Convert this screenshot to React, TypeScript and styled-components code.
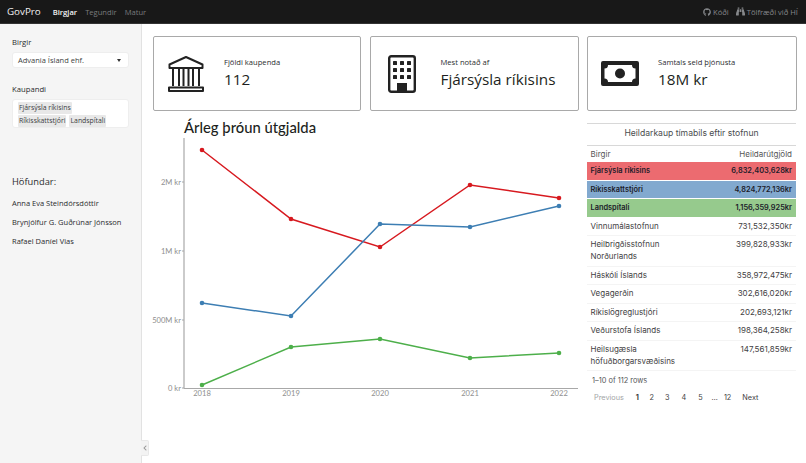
import React from 'react';
import styled, { createGlobalStyle } from 'styled-components';
import { FaGithub, FaBinoculars, FaChevronLeft } from 'react-icons/fa';

const GlobalStyle = createGlobalStyle`
  html, body {
    margin: 0;
    padding: 0;
    background: #fff;
    overflow: hidden;
  }
  body {
    font-family: "Open Sans", "Liberation Sans", sans-serif;
    color: #1d1f21;
  }
  * { box-sizing: border-box; }
`;

const Page = styled.div`
  width: 806px;
  height: 463px;
  display: flex;
  flex-direction: column;
`;

const Navbar = styled.nav`
  height: 24px;
  flex: none;
  background: #181818;
  border-bottom: 1px solid #333;
  display: flex;
  align-items: center;
  padding: 0 8px 0 7px;
`;

const Brand = styled.span`
  font-size: 9.8px;
  color: #f2f2f2;
  margin-right: 12px;
`;

const NavLink = styled.span<{ $active?: boolean }>`
  font-size: 7.6px;
  font-weight: ${(p) => (p.$active ? 600 : 400)};
  color: ${(p) => (p.$active ? '#f5f5f5' : '#797b7d')};
  margin-right: 8px;
`;

const NavRight = styled.div`
  margin-left: auto;
  display: flex;
  align-items: center;
  gap: 7px;
`;

const ExternalLink = styled.span`
  display: flex;
  align-items: center;
  gap: 2px;
  font-size: 7.6px;
  color: #85878a;
`;

const Body = styled.div`
  flex: 1;
  display: flex;
  min-height: 0;
`;

const Sidebar = styled.aside`
  position: relative;
  width: 142px;
  flex: none;
  background: #f5f5f5;
  border-right: 1px solid #e2e2e2;
  padding: 12px 12px;
`;

const FieldLabel = styled.div`
  font-size: 7.7px;
  line-height: 12px;
  color: #2a2c2e;
  margin-bottom: 4px;
`;

const SelectBox = styled.div`
  height: 16px;
  background: #fff;
  border: 1px solid #eee;
  border-radius: 3px;
  display: flex;
  align-items: center;
  justify-content: space-between;
  padding: 0 7px 0 5px;
  font-size: 7.5px;
  color: #3d3f41;
  margin-bottom: 15px;
`;

const Caret = styled.span`
  width: 0;
  height: 0;
  border-left: 2.5px solid transparent;
  border-right: 2.5px solid transparent;
  border-top: 3px solid #333;
`;

const MultiBox = styled.div`
  height: 29px;
  background: #fff;
  border: 1px solid #eee;
  border-radius: 3px;
  padding: 2px 5px;
  display: flex;
  flex-wrap: wrap;
  align-content: flex-start;
  gap: 1px 3px;
  margin-bottom: 47px;
`;

const Tag = styled.span`
  background: #e8e8e8;
  border-radius: 1px;
  padding: 0 1px;
  font-size: 6.9px;
  line-height: 12px;
  color: #3a3c3e;
`;

const AuthorsTitle = styled.div`
  font-size: 9.3px;
  line-height: 14px;
  color: #2a2c2e;
  margin-bottom: 8px;
`;

const Author = styled.div`
  font-size: 7.5px;
  line-height: 12px;
  color: #2a2c2e;
  margin-bottom: 7px;
  white-space: nowrap;
`;

const Collapse = styled.div`
  position: absolute;
  right: -8px;
  top: 416px;
  width: 8px;
  height: 16px;
  background: #f3f3f3;
  border: 1px solid #e8e8e8;
  border-left: none;
  border-radius: 0 2px 2px 0;
  display: flex;
  align-items: center;
  justify-content: center;
  color: #999;
`;

const Main = styled.main`
  flex: 1;
  min-width: 0;
  padding: 12px 10px 0 11px;
  display: flex;
  flex-direction: column;
`;

const Cards = styled.div`
  display: grid;
  grid-template-columns: 208px 209px 210px;
  column-gap: 8.5px;
  justify-content: start;
`;

const Card = styled.div`
  height: 75px;
  border: 1px solid #a9a9a9;
  border-radius: 2px;
  display: flex;
  align-items: center;
  background: #fff;
`;

const IconSlot = styled.div`
  width: 70px;
  padding-right: 7px;
  flex: none;
  display: flex;
  justify-content: center;
  color: #222;
`;

const CardText = styled.div`
  display: flex;
  flex-direction: column;
`;

const CardLabel = styled.div`
  font-size: 7.6px;
  line-height: 10px;
  color: #2b2d2f;
  margin-bottom: 2px;
`;

const CardValue = styled.div`
  font-size: 15.3px;
  line-height: 21px;
  color: #1d1f21;
`;

const Content = styled.div`
  display: flex;
  margin-top: 7px;
  align-items: flex-start;
`;

const ChartColumn = styled.section`
  width: 433px;
  flex: none;
  margin-left: -3px;
  position: relative;
`;

const ChartTitle = styled.h2`
  position: absolute;
  left: 34px;
  top: -1px;
  margin: 0;
  font-family: Lato, "Liberation Sans", sans-serif;
  font-size: 14.8px;
  line-height: 20px;
  font-weight: 500;
  color: #1d1f21;
`;

const ChartSvg = styled.svg`
  display: block;
`;

const AxisLabel = styled.text`
  font-family: Lato, "Liberation Sans", sans-serif;
  font-size: 7.6px;
  fill: #8e8e8e;
`;

const TableColumn = styled.section`
  width: 209px;
  flex: none;
  margin-left: 4px;
  font-family: Inter, "Liberation Sans", sans-serif;
`;

const TableTitle = styled.div`
  margin-top: 5px;
  height: 23px;
  border-top: 1px solid #d8d8d8;
  border-bottom: 1px solid #d8d8d8;
  text-align: center;
  font-size: 8.6px;
  line-height: 19px;
  color: #4a4c4e;
`;

const DataTable = styled.table`
  width: 100%;
  border-collapse: collapse;
  font-size: 8px;
  color: #3a3c3e;
`;

const HeadCell = styled.th<{ $right?: boolean }>`
  font-weight: 400;
  height: 16px;
  padding: 0 4px 0 3.5px;
  text-align: ${(p) => (p.$right ? 'right' : 'left')};
  color: #555;
`;

const Row = styled.tr<{ $bg?: string }>`
  background: ${(p) => p.$bg ?? 'transparent'};
  font-weight: ${(p) => (p.$bg ? 600 : 400)};
  font-size: ${(p) => (p.$bg ? '7.4px' : '8px')};
  color: ${(p) => (p.$bg ? '#1c1c2a' : '#3f4143')};
`;

const Cell = styled.td<{ $right?: boolean; $bg?: boolean }>`
  vertical-align: top;
  padding: 3px 4px 3px 3.5px;
  line-height: 11.6px;
  text-align: ${(p) => (p.$right ? 'right' : 'left')};
  border-bottom: 1px solid ${(p) => (p.$bg ? '#fff' : '#f4f4f4')};
`;

const Rows = styled.div`
  font-size: 7.4px;
  color: #55575a;
  padding: 5px 5px 0;
  line-height: 10px;
`;

const Pager = styled.div`
  display: flex;
  align-items: center;
  font-size: 7.3px;
  line-height: 10px;
  color: #3f4143;
  padding: 7px 0 0 7px;
`;

const PageItem = styled.span<{ $gap?: number; $muted?: boolean; $bold?: boolean }>`
  margin-left: ${(p) => p.$gap ?? 0}px;
  flex: none;
  color: ${(p) => (p.$muted ? '#a2a4a6' : '#3f4143')};
  font-weight: ${(p) => (p.$bold ? 700 : 400)};
`;

function BankIcon() {
  return (
    <svg width="38" height="38" viewBox="0 0 38 38" fill="none" stroke="#222" strokeWidth="2">
      <path d="M19 2 L2.5 9.5 V13 H35.5 V9.5 Z" strokeLinejoin="round" />
      <path d="M6 13 V31 M12 13 V31 M16.5 13 V31 M21.5 13 V31 M26 13 V31 M32 13 V31" />
      <path d="M2 36 V32.5 H36 V36 Z" strokeLinejoin="round" />
    </svg>
  );
}

function BuildingIcon() {
  return (
    <svg width="28" height="38" viewBox="0 0 28 38">
      <rect x="1.2" y="1.2" width="25.6" height="35.6" rx="2" fill="#fff" stroke="#222" strokeWidth="2.4" />
      {[5, 12, 19].map((x) =>
        [6, 13, 20].map((y) => <rect key={`${x}-${y}`} x={x} y={y} width="4" height="4" rx="0.6" fill="#222" />),
      )}
      <rect x="9" y="28" width="10" height="9" fill="#222" />
    </svg>
  );
}

function BillIcon() {
  return (
    <svg width="38" height="25" viewBox="0 0 38 25">
      <path
        fill="#222"
        fillRule="evenodd"
        d="M2 0 H36 Q38 0 38 2 V23 Q38 25 36 25 H2 Q0 25 0 23 V2 Q0 0 2 0 Z M7 4 Q7 7.5 3.5 7.5 V17.5 Q7 17.5 7 21 H31 Q31 17.5 34.5 17.5 V7.5 Q31 7.5 31 4 Z"
      />
      <circle cx="19" cy="12.5" r="5" fill="#222" />
    </svg>
  );
}

const years = [
  { label: '2018', x: 52 },
  { label: '2019', x: 141 },
  { label: '2020', x: 230 },
  { label: '2021', x: 320 },
  { label: '2022', x: 409 },
];

const yTicks = [
  { label: '2M kr', y: 64 },
  { label: '1M kr', y: 133 },
  { label: '500M kr', y: 202 },
  { label: '0 kr', y: 270 },
];

const series = [
  { color: '#d7191f', values: [32, 101, 129, 67, 80] },
  { color: '#3d7eb3', values: [185, 198, 106, 109, 88] },
  { color: '#4daf4a', values: [267, 229, 221, 240, 235] },
];

function Chart() {
  return (
    <ChartSvg width="433" height="292" viewBox="0 0 433 292">
      <line x1="34" y1="20" x2="34" y2="270.5" stroke="#a8a8a8" strokeWidth="1.2" />
      <line x1="34" y1="270.5" x2="428" y2="270.5" stroke="#a8a8a8" strokeWidth="1.2" />
      {yTicks.map((t) => (
        <g key={t.label}>
          <line x1="32" y1={t.y} x2="34" y2={t.y} stroke="#a8a8a8" />
          <AxisLabel x="31" y={t.y + 2.6} textAnchor="end">
            {t.label}
          </AxisLabel>
        </g>
      ))}
      {years.map((t) => (
        <AxisLabel key={t.label} x={t.x} y="278" textAnchor="middle">
          {t.label}
        </AxisLabel>
      ))}
      {series.map((s) => (
        <g key={s.color}>
          <polyline
            fill="none"
            stroke={s.color}
            strokeWidth="1.5"
            points={s.values.map((v, i) => `${years[i].x},${v}`).join(' ')}
          />
          {s.values.map((v, i) => (
            <circle key={i} cx={years[i].x} cy={v} r="2.3" fill={s.color} />
          ))}
        </g>
      ))}
    </ChartSvg>
  );
}

const tableRows: { name: React.ReactNode; total: string; bg?: string }[] = [
  { name: 'Fjársýsla ríkisins', total: '6,832,403,628kr', bg: '#ec6b70' },
  { name: 'Ríkisskattstjóri', total: '4,824,772,136kr', bg: '#82a9cf' },
  { name: 'Landspítali', total: '1,156,359,925kr', bg: '#96ca8d' },
  { name: 'Vinnumálastofnun', total: '731,532,350kr' },
  { name: <>Heilbrigðisstofnun<br />Norðurlands</>, total: '399,828,933kr' },
  { name: 'Háskóli Íslands', total: '358,972,475kr' },
  { name: 'Vegagerðin', total: '302,616,020kr' },
  { name: 'Ríkislögreglustjóri', total: '202,693,121kr' },
  { name: 'Veðurstofa Íslands', total: '198,364,258kr' },
  { name: <>Heilsugæsla<br />höfuðborgarsvæðisins</>, total: '147,561,859kr' },
];

export default function App() {
  return (
    <Page>
      <GlobalStyle />
      <Navbar>
        <Brand>GovPro</Brand>
        <NavLink $active>Birgjar</NavLink>
        <NavLink>Tegundir</NavLink>
        <NavLink>Matur</NavLink>
        <NavRight>
          <ExternalLink>
            <FaGithub size={8} />
            Kóði
          </ExternalLink>
          <ExternalLink>
            <FaBinoculars size={9} />
            Tölfræði við HÍ
          </ExternalLink>
        </NavRight>
      </Navbar>
      <Body>
        <Sidebar>
          <FieldLabel>Birgir</FieldLabel>
          <SelectBox>
            Advania Ísland ehf.
            <Caret />
          </SelectBox>
          <FieldLabel>Kaupandi</FieldLabel>
          <MultiBox>
            <Tag>Fjársýsla ríkisins</Tag>
            <Tag>Ríkisskattstjóri</Tag>
            <Tag>Landspítali</Tag>
          </MultiBox>
          <AuthorsTitle>Höfundar:</AuthorsTitle>
          <Author>Anna Eva Steindórsdóttir</Author>
          <Author>Brynjólfur G. Guðrúnar Jónsson</Author>
          <Author>Rafael Daníel Vias</Author>
          <Collapse>
            <FaChevronLeft size={6} />
          </Collapse>
        </Sidebar>
        <Main>
          <Cards>
            <Card>
              <IconSlot>
                <BankIcon />
              </IconSlot>
              <CardText>
                <CardLabel>Fjöldi kaupenda</CardLabel>
                <CardValue>112</CardValue>
              </CardText>
            </Card>
            <Card>
              <IconSlot>
                <BuildingIcon />
              </IconSlot>
              <CardText>
                <CardLabel>Mest notað af</CardLabel>
                <CardValue>Fjársýsla ríkisins</CardValue>
              </CardText>
            </Card>
            <Card>
              <IconSlot>
                <BillIcon />
              </IconSlot>
              <CardText>
                <CardLabel>Samtals seld þjónusta</CardLabel>
                <CardValue>18M kr</CardValue>
              </CardText>
            </Card>
          </Cards>
          <Content>
            <ChartColumn>
              <ChartTitle>Árleg þróun útgjalda</ChartTitle>
              <Chart />
            </ChartColumn>
            <TableColumn>
              <TableTitle>Heildarkaup tímabils eftir stofnun</TableTitle>
              <DataTable>
                <thead>
                  <tr>
                    <HeadCell>Birgir</HeadCell>
                    <HeadCell $right>Heildarútgjöld</HeadCell>
                  </tr>
                </thead>
                <tbody>
                  {tableRows.map((r) => (
                    <Row key={r.total} $bg={r.bg}>
                      <Cell $bg={!!r.bg}>{r.name}</Cell>
                      <Cell $right $bg={!!r.bg}>
                        {r.total}
                      </Cell>
                    </Row>
                  ))}
                </tbody>
              </DataTable>
              <Rows>1–10 of 112 rows</Rows>
              <Pager>
                <PageItem $muted>Previous</PageItem>
                <PageItem $gap={12} $bold>1</PageItem>
                <PageItem $gap={10.5}>2</PageItem>
                <PageItem $gap={11}>3</PageItem>
                <PageItem $gap={12}>4</PageItem>
                <PageItem $gap={12}>5</PageItem>
                <PageItem $gap={9}>…</PageItem>
                <PageItem $gap={6}>12</PageItem>
                <PageItem $gap={11}>Next</PageItem>
              </Pager>
            </TableColumn>
          </Content>
        </Main>
      </Body>
    </Page>
  );
}
